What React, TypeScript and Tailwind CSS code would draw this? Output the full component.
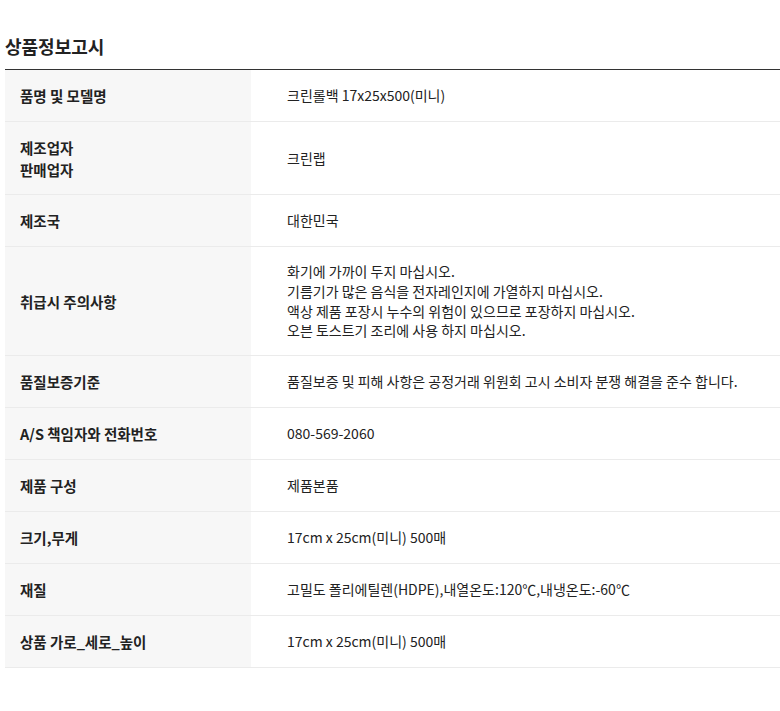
const rows: { label: string[]; value: string[] }[] = [
  { label: ["품명 및 모델명"], value: ["크린롤백 17x25x500(미니)"] },
  { label: ["제조업자", "판매업자"], value: ["크린랩"] },
  { label: ["제조국"], value: ["대한민국"] },
  {
    label: ["취급시 주의사항"],
    value: [
      "화기에 가까이 두지 마십시오.",
      "기름기가 많은 음식을 전자레인지에 가열하지 마십시오.",
      "액상 제품 포장시 누수의 위험이 있으므로 포장하지 마십시오.",
      "오븐 토스트기 조리에 사용 하지 마십시오.",
    ],
  },
  { label: ["품질보증기준"], value: ["품질보증 및 피해 사항은 공정거래 위원회 고시 소비자 분쟁 해결을 준수 합니다."] },
  { label: ["A/S 책임자와 전화번호"], value: ["080-569-2060"] },
  { label: ["제품 구성"], value: ["제품본품"] },
  { label: ["크기,무게"], value: ["17cm x 25cm(미니) 500매"] },
  { label: ["재질"], value: ["고밀도 폴리에틸렌(HDPE),내열온도:120℃,내냉온도:-60℃"] },
  { label: ["상품 가로_세로_높이"], value: ["17cm x 25cm(미니) 500매"] },
];

export default function App() {
  return (
    <div
      className="min-h-[711px] bg-white pl-[5px] text-[#222]"
      style={{ fontFamily: '"Noto Sans CJK KR", "Noto Sans", sans-serif' }}
    >
      {/* Title */}
      <h2 className="pt-8 mb-[9px] text-[18px] leading-[28px] font-bold">상품정보고시</h2>

      {/* Info table */}
      <div className="border-t border-[#333]">
        {rows.map((row, i) => (
          <div key={i} className="flex min-h-[52px] border-b border-[#ebebeb]">
            <div className="w-[246px] shrink-0 bg-[#f7f7f7] pl-[15px] pt-[15px] pb-[14px] text-[14.5px] leading-[21.5px] font-bold flex flex-col justify-center">
              {row.label.map((l) => (
                <div key={l}>{l}</div>
              ))}
            </div>
            <div className="flex-1 pl-[36px] pt-[15px] pb-[14px] text-[14px] leading-[19.75px] text-[#222] flex flex-col justify-center">
              {row.value.map((v) => (
                <div key={v}>{v}</div>
              ))}
            </div>
          </div>
        ))}
      </div>
    </div>
  );
}
